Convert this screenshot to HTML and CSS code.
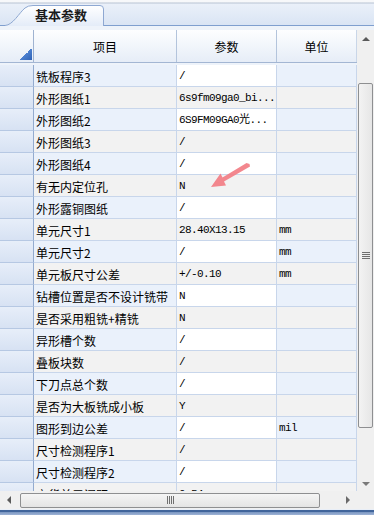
FILE: index.html
```html
<!DOCTYPE html>
<html lang="zh">
<head>
    <meta charset="UTF-8">
    <title>基本参数</title>
    <link rel="stylesheet" href="styles.css">
</head>
<body>
    <div class="tabs">
        <div class="tab-edge"></div>
        <div class="tab">
            <svg class="tab-shape" width="99" height="21" viewBox="0 0 99 21">
                <defs>
                    <linearGradient id="tabfill" x1="0" y1="0" x2="0" y2="1">
                        <stop offset="0" stop-color="#ffffff"/>
                        <stop offset="1" stop-color="#e4ecf8"/>
                    </linearGradient>
                </defs>
                <path d="M0 20.5 C8 20 14 8 20 3 Q23 0.5 28 0.5 L95 0.5 Q98.5 0.5 98.5 4 L98.5 21 L0 21 Z" fill="url(#tabfill)"/>
                <path d="M0 20.5 C8 20 14 8 20 3 Q23 0.5 28 0.5 L95 0.5 Q98.5 0.5 98.5 4 L98.5 21" fill="none" stroke="#8ea8d2"/>
            </svg>
            <span class="tab-text">基本参数</span>
        </div>
        <div class="tab-rest"></div>
    </div>

    <div class="view">
        <div class="band"></div>
        <div class="grid">
            <div class="main">
                <div class="head">
                    <div class="corner"><span class="tri"></span></div>
                    <div class="hcell">项目</div>
                    <div class="hcell">参数</div>
                    <div class="hcell">单位</div>
                </div>
                <div class="rows">
                    <div class="row"><div class="rh"></div><div class="name">铣板程序3</div><div class="val">/</div><div class="unit"></div></div>
                    <div class="row odd"><div class="rh"></div><div class="name">外形图纸1</div><div class="val">6s9fm09ga0_bi...</div><div class="unit"></div></div>
                    <div class="row"><div class="rh"></div><div class="name">外形图纸2</div><div class="val">6S9FM09GA0光...</div><div class="unit"></div></div>
                    <div class="row odd"><div class="rh"></div><div class="name">外形图纸3</div><div class="val">/</div><div class="unit"></div></div>
                    <div class="row"><div class="rh"></div><div class="name">外形图纸4</div><div class="val">/</div><div class="unit"></div></div>
                    <div class="row odd"><div class="rh"></div><div class="name">有无内定位孔</div><div class="val">N</div><div class="unit"></div></div>
                    <div class="row"><div class="rh"></div><div class="name">外形露铜图纸</div><div class="val">/</div><div class="unit"></div></div>
                    <div class="row odd"><div class="rh"></div><div class="name">单元尺寸1</div><div class="val">28.40X13.15</div><div class="unit">mm</div></div>
                    <div class="row"><div class="rh"></div><div class="name">单元尺寸2</div><div class="val">/</div><div class="unit">mm</div></div>
                    <div class="row odd"><div class="rh"></div><div class="name">单元板尺寸公差</div><div class="val">+/-0.10</div><div class="unit">mm</div></div>
                    <div class="row"><div class="rh"></div><div class="name">钻槽位置是否不设计铣带</div><div class="val">N</div><div class="unit"></div></div>
                    <div class="row odd"><div class="rh"></div><div class="name">是否采用粗铣+精铣</div><div class="val">N</div><div class="unit"></div></div>
                    <div class="row"><div class="rh"></div><div class="name">异形槽个数</div><div class="val">/</div><div class="unit"></div></div>
                    <div class="row odd"><div class="rh"></div><div class="name">叠板块数</div><div class="val">/</div><div class="unit"></div></div>
                    <div class="row"><div class="rh"></div><div class="name">下刀点总个数</div><div class="val">/</div><div class="unit"></div></div>
                    <div class="row odd"><div class="rh"></div><div class="name">是否为大板铣成小板</div><div class="val">Y</div><div class="unit"></div></div>
                    <div class="row"><div class="rh"></div><div class="name">图形到边公差</div><div class="val">/</div><div class="unit">mil</div></div>
                    <div class="row odd"><div class="rh"></div><div class="name">尺寸检测程序1</div><div class="val">/</div><div class="unit"></div></div>
                    <div class="row"><div class="rh"></div><div class="name">尺寸检测程序2</div><div class="val">/</div><div class="unit"></div></div>
                    <div class="row odd"><div class="rh"></div><div class="name">交货单元间距</div><div class="val">0.54</div><div class="unit"></div></div>
                </div>
                <!-- hand drawn arrow pointing at the N value -->
                <svg class="mark" width="40" height="28" viewBox="0 0 40 28">
                    <path d="M38.5 1 L35.5 0 L11.5 14.5 L9.5 10.5 L0 24 L15 22.5 L13 18.5 L39 3.5 Z" fill="#f27d84" opacity="0.92"/>
                </svg>
            </div>
            <div class="vscroll">
                <div class="arrow up"></div>
                <div class="vtrack">
                    <div class="vthumb"><span class="grip-h"></span></div>
                </div>
                <div class="arrow down"></div>
            </div>
        </div>
        <div class="hbar">
            <div class="hscroll">
                <div class="arrow left"></div>
                <div class="htrack">
                    <div class="hthumb"><span class="grip-v"></span></div>
                </div>
                <div class="arrow right"></div>
            </div>
            <div class="sizer"></div>
        </div>
    </div>
    <div class="bottom"></div>
</body>
</html>
```

FILE: styles.css
```css
body {
    margin: 0;
    width: 374px;
    height: 515px;
    overflow: hidden;
    font-family: "Noto Sans CJK SC", sans-serif;
    font-size: 12px;
    color: #000;
    background-color: #f0f0f0;
}

/* tab strip */
.tabs {
    display: flex;
    align-items: flex-end;
    height: 26px;
    background: linear-gradient(#f7f8fa 0px, #f7f8fa 2px, #b8c3d3 3px, #eaf0f9 4px, #d9e4f4 26px);
    box-sizing: border-box;
}

.tab-edge {
    width: 5px;
    height: 1px;
    background-color: #7f9fcf;
}

.tab {
    position: relative;
    width: 99px;
    height: 21px;
}

.tab-shape {
    position: absolute;
    left: 0;
    top: 0;
}

.tab-text {
    position: relative;
    display: block;
    padding-left: 30px;
    line-height: 20px;
    font-size: 13px;
    font-weight: bold;
    color: #1b1b1b;
}

.tab-rest {
    flex: 1;
    height: 1px;
    background-color: #7f9fcf;
}

/* grid area */
.view {
    display: flex;
    flex-direction: column;
}

.band {
    height: 4px;
    background-color: #eef3fa;
}

.grid {
    display: flex;
    height: 461px;
}

.main {
    position: relative;
    width: 357px;
    overflow: hidden;
    background-color: #fff;
}

.head,
.row {
    display: grid;
    grid-template-columns: 34px 143px 100px 80px;
}

.head {
    height: 33px;
    border-bottom: 1px solid #a3b6d3;
    background: linear-gradient(#fdfeff, #e6edf7);
    box-sizing: border-box;
}

.hcell,
.corner {
    border-right: 1px solid #b3c4dc;
    display: flex;
    align-items: center;
    justify-content: center;
    box-sizing: border-box;
}

.hcell:last-child {
    border-right: 1px solid #c9d6e8;
}

.corner {
    position: relative;
    border-right-color: #9fb3d1;
}

.tri {
    position: absolute;
    right: 1px;
    bottom: 2px;
    width: 12px;
    height: 12px;
    background: linear-gradient(135deg, transparent 50%, #4b7fcf 50%, #2f62b5);
}

.rows {
    padding-top: 2px;
    background-color: #eef3fa;
}

.row {
    height: 22px;
    background-color: #eaf1fb;
}

.row.odd {
    background-color: #f2f2f2;
}

.row > div {
    border-right: 1px solid #c8d6eb;
    border-bottom: 1px solid #c8d6eb;
    box-sizing: border-box;
    padding: 1px 0 0 2px;
    line-height: 21px;
    white-space: nowrap;
    overflow: hidden;
}

.rh {
    background: linear-gradient(#e7eef9, #d7e2f3);
    border-right-color: #93abcf !important;
    border-bottom-color: #b6c8e3 !important;
}

.val {
    background-color: #fff;
    font-family: "Liberation Mono", "Noto Sans CJK SC", monospace;
    font-size: 11px;
    letter-spacing: -0.6px;
}

.row.odd .val {
    background-color: #f2f2f2;
}

.unit {
    font-family: "Liberation Mono", monospace;
    font-size: 11px;
    letter-spacing: -0.6px;
}

.mark {
    position: absolute;
    left: 211px;
    top: 133px;
}

/* scrollbars */
.vscroll {
    width: 17px;
    display: flex;
    flex-direction: column;
    background-color: #f0f0f0;
}

.arrow {
    width: 0;
    height: 0;
    border: 4px solid transparent;
}

.arrow.up {
    margin: 7px auto 0;
    border-top: none;
    border-bottom: 4px solid #5a5a5a;
}

.arrow.down {
    margin: 0 auto 5px;
    border-bottom: none;
    border-top: 4px solid #7a7a7a;
}

.vtrack {
    flex: 1;
    padding: 42px 1px 0;
}

.vthumb {
    height: 345px;
    border: 1px solid #8e8f91;
    border-radius: 2px;
    background: linear-gradient(90deg, #f3f3f3, #e6e6e6);
    display: flex;
    align-items: center;
    justify-content: center;
    box-sizing: border-box;
}

.grip-h {
    width: 8px;
    height: 7px;
    background: repeating-linear-gradient(#6f6f6f 0px, #6f6f6f 1px, transparent 1px, transparent 2px);
}

.hbar {
    display: flex;
    height: 18px;
}

.hscroll {
    width: 357px;
    display: flex;
    align-items: center;
    background-color: #f0f0f0;
}

.arrow.left {
    margin-left: 7px;
    border-left: none;
    border-right: 4px solid #5a5a5a;
}

.arrow.right {
    margin-right: 7px;
    border-right: none;
    border-left: 4px solid #6a6a6a;
}

.htrack {
    flex: 1;
    padding: 0 26px 0 9px;
}

.hthumb {
    height: 15px;
    border: 1px solid #8e8f91;
    border-radius: 2px;
    background: linear-gradient(#f5f5f5, #e4e4e4);
    display: flex;
    align-items: center;
    justify-content: center;
    box-sizing: border-box;
}

.grip-v {
    width: 7px;
    height: 8px;
    background: repeating-linear-gradient(90deg, #6f6f6f 0px, #6f6f6f 1px, transparent 1px, transparent 2px);
}

.sizer {
    flex: 1;
    background-color: #f0f0f0;
}

.bottom {
    height: 6px;
    border-top: 1px solid #e8eef7;
    background: linear-gradient(#41659b 0px, #41659b 2px, #7894c0 2px, #9fb4d6 5px);
    box-sizing: border-box;
}
```
